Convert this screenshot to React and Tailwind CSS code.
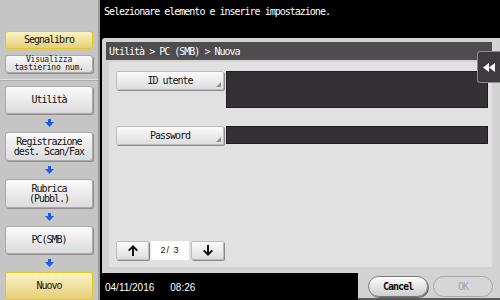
import React from 'react';

const mono = "font-['DejaVu_Sans_Mono',monospace] tracking-[-1px]";

const BlueArrow = () => (
    <div className="h-[18px] flex items-center justify-center">
        <svg width="9" height="8" viewBox="0 0 9 8">
            <rect x="3" y="0" width="3" height="3" fill="#1a5fe6" />
            <polygon points="0,3 9,3 4.5,8" fill="#1a5fe6" />
        </svg>
    </div>
);

const SideButton = ({ children, yellow, h = 'h-[28px]' }) => (
    <div
        className={`${h} mx-[5px] flex items-center justify-center text-center rounded-[3px] border ${
            yellow
                ? 'border-[#e6c81e] bg-gradient-to-b from-[#fbf3c4] to-[#e6cf78]'
                : 'border-[#a9a9a9] bg-gradient-to-b from-[#fafafa] to-[#dcdcdc] shadow-[1px_1px_0_#8e8e8e]'
        } text-[10px] leading-[10px] text-[#111] ${mono}`}
    >
        {children}
    </div>
);

const FieldButton = ({ label }) => (
    <div className={`relative w-[108px] h-[19px] flex items-center justify-center rounded-[2px] border border-[#bdbdbd] bg-gradient-to-b from-[#fbfbfb] to-[#dedede] shadow-[1px_1px_0_#8a8a8a] text-[10px] text-[#111] ${mono}`}>
        {label}
        <svg className="absolute right-[2px] bottom-[2px]" width="5" height="5" viewBox="0 0 5 5">
            <polygon points="5,0 5,5 0,5" fill="#8f8f8f" />
        </svg>
    </div>
);

const PagerButton = ({ up }) => (
    <div className="w-[33px] h-[19px] flex items-center justify-center rounded-[2px] border border-[#bdbdbd] bg-gradient-to-b from-[#fbfbfb] to-[#dedede] shadow-[1px_1px_0_#8a8a8a]">
        <svg width="10" height="11" viewBox="0 0 10 11">
            {up ? (
                <path d="M5 0 L10 5 L8.5 6.2 L6 3.8 L6 11 L4 11 L4 3.8 L1.5 6.2 L0 5 Z" fill="#111" />
            ) : (
                <path d="M5 11 L10 6 L8.5 4.8 L6 7.2 L6 0 L4 0 L4 7.2 L1.5 4.8 L0 6 Z" fill="#111" />
            )}
        </svg>
    </div>
);

const App = () => {
    return (
        <div className="w-[500px] h-[300px] flex overflow-hidden bg-black">
            {/* sidebar */}
            <div className="w-[100px] h-full bg-[#c5c5c5] border-r-[2px] border-[#9d9d9d] flex flex-col">
                <div className="h-[31px]" />
                <SideButton yellow h="h-[18px]">Segnalibro</SideButton>
                <div className="h-[6px]" />
                <SideButton h="h-[18px]">
                    <span className="text-[8px] leading-[8px] tracking-[-0.2px] block">Visualizza<br />tastierino num.</span>
                </SideButton>
                <div className="h-[6px]" />
                <div className="border-t border-[#e2e2e2] border-b border-b-[#aaaaaa]" />
                <div className="h-[5px]" />
                <SideButton>Utilità</SideButton>
                <BlueArrow />
                <SideButton h="h-[29px]">Registrazione<br />dest. Scan/Fax</SideButton>
                <BlueArrow />
                <SideButton h="h-[29px]">Rubrica<br />(Pubbl.)</SideButton>
                <BlueArrow />
                <SideButton>PC(SMB)</SideButton>
                <BlueArrow />
                <SideButton yellow>Nuovo</SideButton>
            </div>

            {/* main */}
            <div className="flex-1 flex flex-col relative">
                <div className={`h-[38px] pl-[4px] pt-[4px] text-white text-[10px] ${mono}`}>
                    Selezionare elemento e inserire impostazione.
                </div>

                <div className="flex-1 ml-[2px] bg-[#d3d3d3] rounded-tl-[3px] pt-[4px] pl-[4px] pr-[8px] pb-[6px] flex flex-col">
                    <div className={`h-[18px] bg-[#4e4c4e] text-white text-[10px] flex items-center pl-[3px] ${mono}`}>
                        Utilità &gt; PC (SMB) &gt; Nuova
                    </div>
                    <div className="flex-1 mt-[2px] ml-[3px] bg-[#e2e1e2] flex flex-col pt-[9px] pl-[7px] pr-[4px] pb-[7px]">
                        <div className="flex gap-[2px]">
                            <FieldButton label="ID utente" />
                            <div className="flex-1 h-[37px] bg-[#333133] border border-[#1e1e1e]" />
                        </div>
                        <div className="flex gap-[2px] mt-[18px]">
                            <FieldButton label="Password" />
                            <div className="flex-1 h-[18px] bg-[#333133] border border-[#1e1e1e]" />
                        </div>
                        <div className="flex-1" />
                        <div className="flex items-center gap-[2px]">
                            <PagerButton up />
                            <div className="w-[38px] h-[19px] bg-white flex items-center justify-center text-[9px] text-[#111] font-['Liberation_Sans',sans-serif] tracking-[1px]">
                                2/ 3
                            </div>
                            <PagerButton />
                        </div>
                    </div>
                </div>

                <div className="h-[27px] flex">
                    <div className="w-[258px] bg-black text-white text-[10px] font-['Liberation_Sans',sans-serif] flex items-center pl-[5px] pt-[1px]">
                        <span>04/11/2016</span>
                        <span className="ml-[16px]">08:26</span>
                    </div>
                    <div className="flex-1 bg-[#d3d3d3] border-b-[2px] border-[#5a5a5a] flex items-start pt-[3px] pl-[10px] gap-[5px]">
                        <div className={`w-[60px] h-[21px] rounded-full border border-[#7a7a7a] bg-gradient-to-b from-[#fdfdfd] to-[#cfcfcf] shadow-[1px_1px_0_#666] flex items-center justify-center text-[10px] text-[#111] font-bold ${mono}`}>
                            Cancel
                        </div>
                        <div className={`w-[60px] h-[21px] rounded-full border border-[#a9a9a9] bg-[#d6d6d6] flex items-center justify-center text-[10px] text-[#a4a4a4] ${mono}`}>
                            OK
                        </div>
                    </div>
                </div>

                {/* collapse tab */}
                <div className="absolute left-[377px] top-[51px] w-[23px] h-[32px] bg-[#3d3b3d] rounded-l-[3px] border border-r-0 border-[#8c8c8c] flex items-center justify-center">
                    <svg width="12" height="9" viewBox="0 0 12 9">
                        <polygon points="0,4.5 6,0 6,9" fill="#fff" />
                        <polygon points="6,4.5 12,0 12,9" fill="#fff" />
                    </svg>
                </div>
            </div>
        </div>
    );
};

export default App;
